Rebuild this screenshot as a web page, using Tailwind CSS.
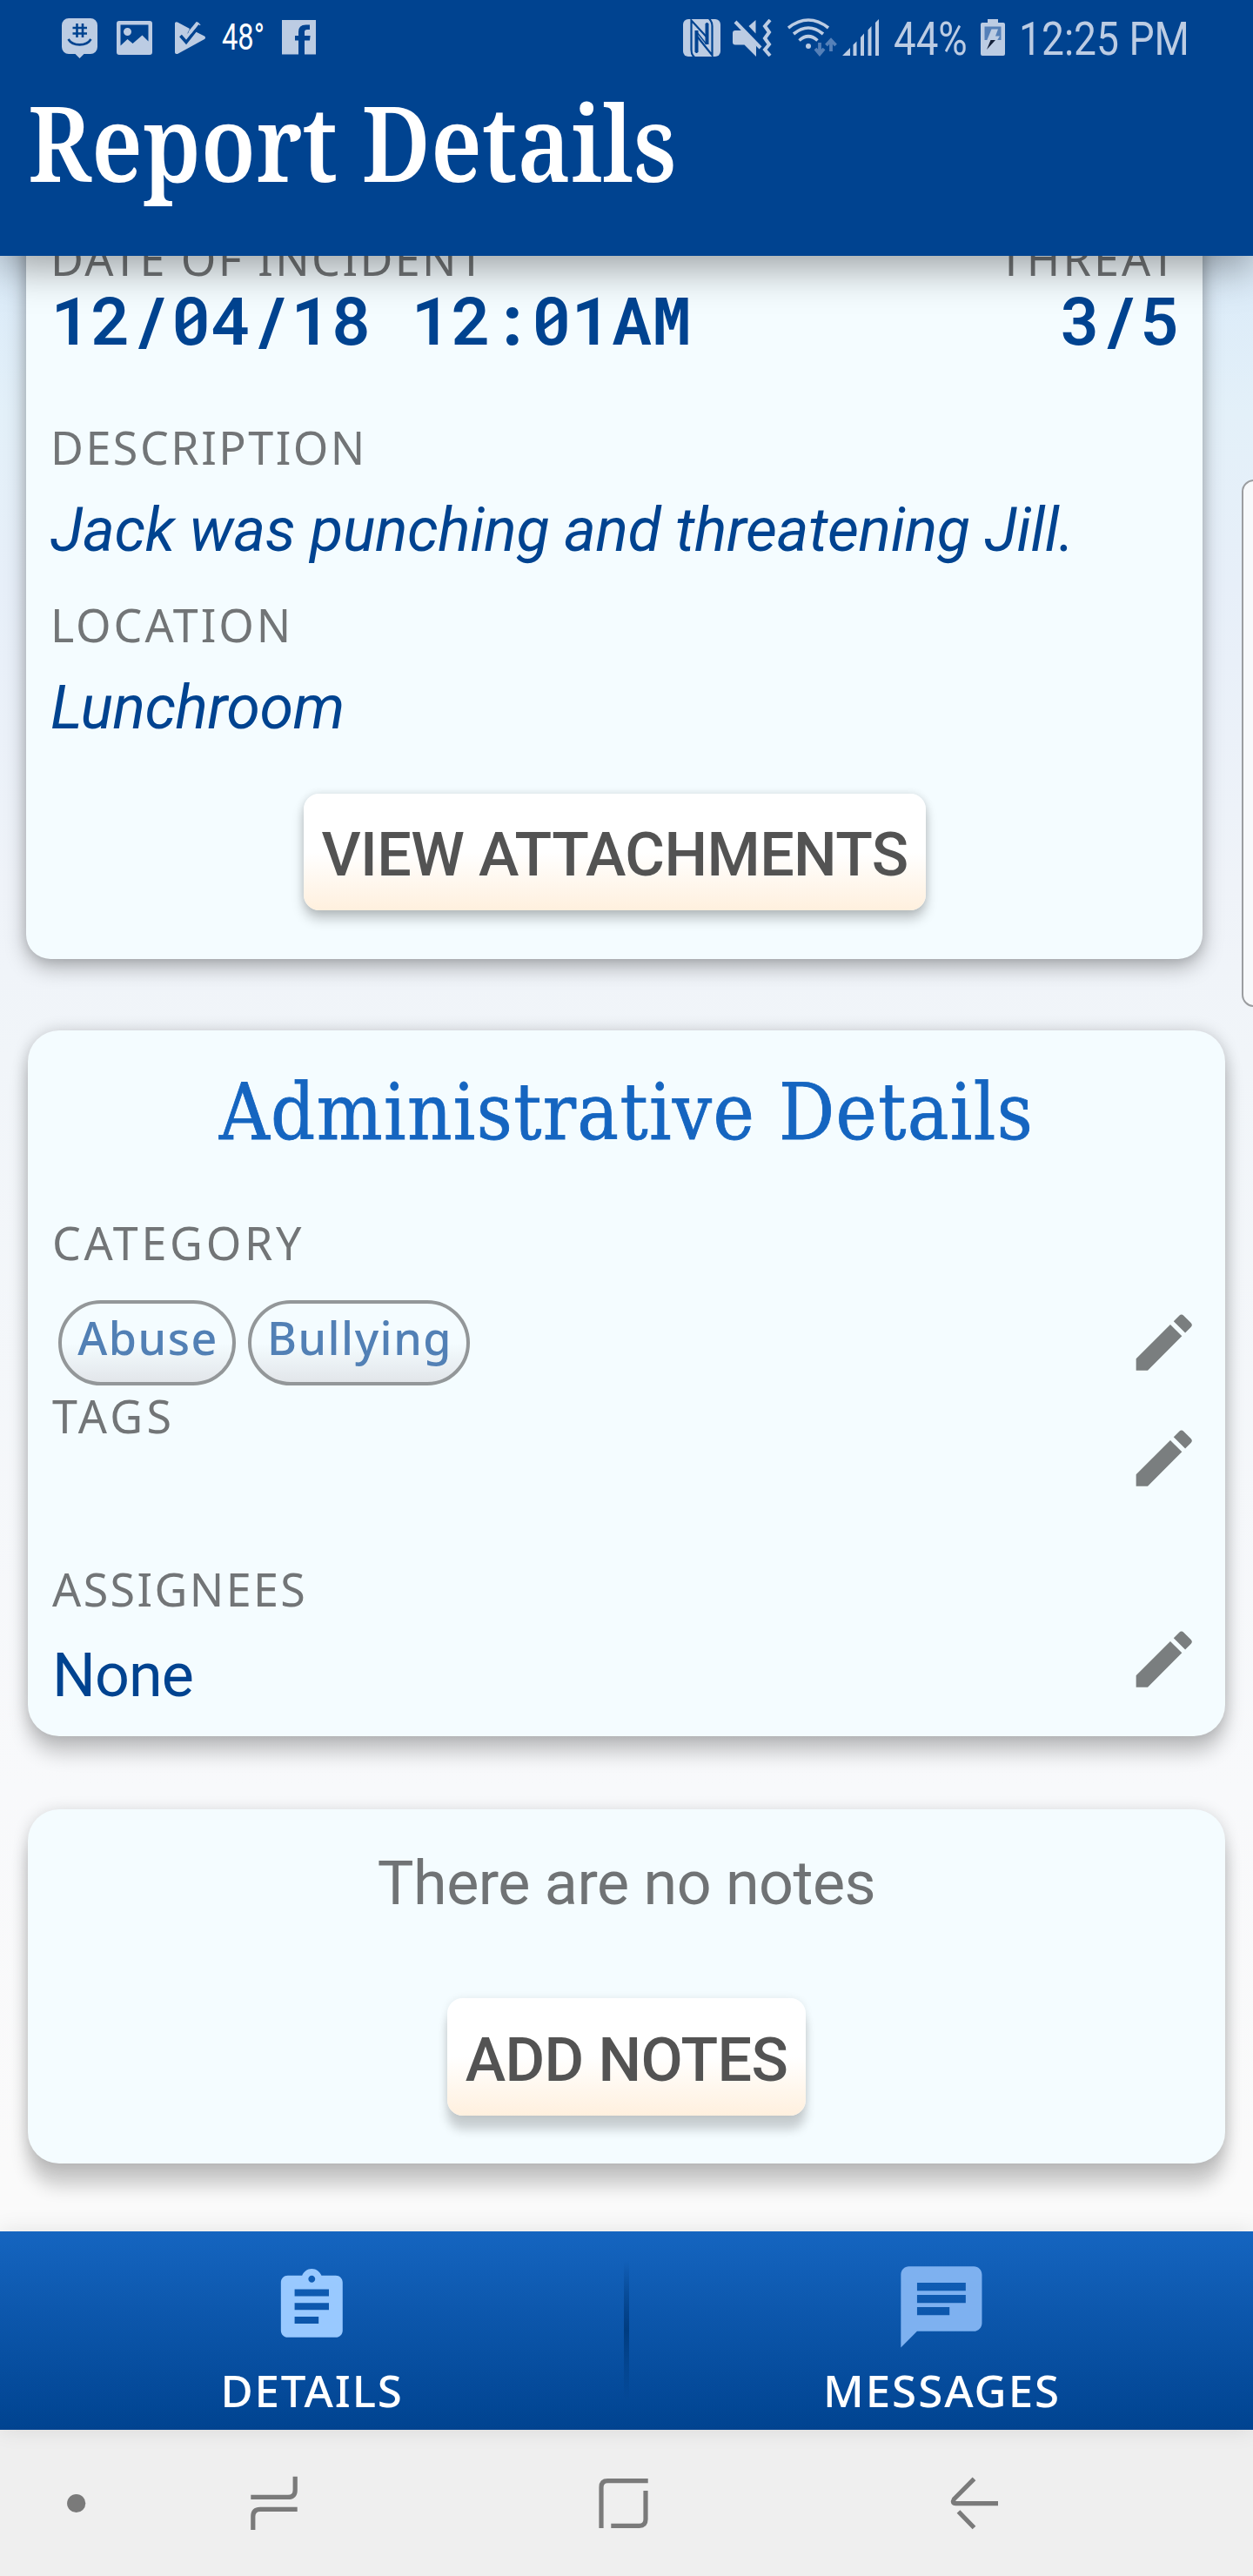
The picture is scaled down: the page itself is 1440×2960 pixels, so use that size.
<!DOCTYPE html>
<html lang="en">
<head>
<meta charset="utf-8">
<title>Report Details</title>
<script src="https://cdn.jsdelivr.net/npm/@tailwindcss/browser@4"></script>
</head>
<body class="w-[1440px] h-[2960px] overflow-hidden flex flex-col bg-[#fafafa] font-[Roboto,sans-serif]">

<header class="relative z-10 h-[294px] shrink-0 bg-[#004390] shadow-[0_14px_44px_rgba(0,0,0,0.36)]">
  <!-- status bar -->
  <div class="h-[88px] flex items-start pl-[71px] text-[#bccce3]">
    <svg class="w-[41px] h-[46px] mt-[20.5px] shrink-0" viewBox="0 0 41 46" fill="currentColor"><path d="M8 0h25a8 8 0 0 1 8 8v25a8 8 0 0 1-8 8h-7.500l-5 5-5-5H8a8 8 0 0 1-8-8V8a8 8 0 0 1 8-8z"/><path d="M17.500 6v16M24 6v16M12.500 11h16.500M12.500 17.500h16.500M7.500 24c5 8.500 21 8.500 26 0" fill="none" stroke="#004390" stroke-width="2.600"/></svg>
    <svg class="w-[41px] h-[39px] mt-[24px] ml-[22px] shrink-0" viewBox="0 0 41 39"><path fill="currentColor" fill-rule="evenodd" d="M3 0h35a3 3 0 0 1 3 3v33a3 3 0 0 1-3 3H3a3 3 0 0 1-3-3V3a3 3 0 0 1 3-3zM4.500 4.500v24l8-7.500 6 5 11-9.500 7 7V4.500zM12.500 8a4.500 4.500 0 1 0 0 9 4.500 4.500 0 0 0 0-9z"/></svg>
    <svg class="w-[35px] h-[38px] mt-[24.5px] ml-[26px] shrink-0" viewBox="0 0 35 38"><path fill="currentColor" d="M0 1.500Q1-.5 3 .5L17 8l-3 6 12.500-13.500 3 3L24 11.500l10 5q2 1.500 0 3.500L3 37q-2.500.5-3-1.500z"/><path d="M6.500 16l6.500 7.500L28.500 4" fill="none" stroke="#004390" stroke-width="3.600"/><path d="M17 12.500L26.500 1" fill="none" stroke="currentColor" stroke-width="4"/></svg>
    <div class="w-[69px] h-[50px] ml-[19px] mt-[17px] shrink-0 whitespace-nowrap"><span class="inline-block origin-left scale-x-[0.76] text-[43px] leading-[50px] text-white">48°</span></div>
    <svg class="w-[39px] h-[39.500px] mt-[23.300px] shrink-0" viewBox="0 0 39 39.500"><path fill="currentColor" d="M0 0h39v39.500H26V23.500h6l.6-5.500H26v-4.500q0-2.500 3-2.500h3V5.500h-4.500q-8.500 0-8.500 8V18h-4v5.500h4v16H0z"/></svg>
    <svg class="w-[43px] h-[43px] mt-[22px] ml-[422px] shrink-0" viewBox="0 0 43 43" fill="none" stroke="#004390"><rect width="43" height="43" rx="6" fill="#bccce3" stroke="none"/><path stroke-width="2.200" d="M13 43.500Q9.500 41 9.500 35V1.500L27.500 21V4M30 -.5Q33.500 3 33.500 8V41.500L15.500 19V39"/><path stroke-width="4" d="M15.500 13V38M27.500 5V29"/><path stroke-width="1.400" d="M15.500 14.500L27 29"/></svg>
    <svg class="w-[45px] h-[43px] mt-[22px] ml-[14px] shrink-0" viewBox="0 0 45 43" fill="currentColor"><path d="M26.500 1v15.500l-8-8.500z"/><path d="M3 3l29 30" stroke="#004390" stroke-width="9" fill="none"/><path d="M3 3l29 30" stroke="currentColor" stroke-width="4" fill="none"/><path d="M0 16q0-3 3-3h9l15 17.500V43L13.500 29.500H3q-3 0-3-3z"/><path d="M43 1l-6 7 5 7-5 7 5 7-5 6 6 7" stroke="currentColor" stroke-width="4" fill="none"/></svg>
    <svg class="w-[57px] h-[44px] mt-[21px] ml-[18px] shrink-0" viewBox="0 0 57 44" fill="none" stroke="currentColor" stroke-width="3.600"><path d="M1 11q23-18 46 0M7 18q17-14 34 0M13.500 25.500q10.500-9.500 21 0"/><circle cx="24" cy="32" r="3" fill="currentColor" stroke="none"/><g stroke="#5580b8" stroke-width="3.800"><path d="M37 28v12M32 35l5 6 5-6M50 38V25M44.500 31l5.500-6 5.500 6"/></g></svg>
    <svg class="w-[42px] h-[42px] mt-[22px] ml-[6px] shrink-0" viewBox="0 0 42 42" fill="currentColor"><path d="M0 42l9-9v9zM12.500 29.500l4-4V42h-4zM21 21l4-4.500V42h-4zM29.500 12.500l4-4.500V42h-4zM38 4l4-4v42h-4z"/></svg>
    <div class="w-[88px] h-[60px] ml-[17px] mt-[15px] shrink-0 whitespace-nowrap"><span class="inline-block origin-left scale-x-[0.845] text-[54px] leading-[60px]">44%</span></div>
    <svg class="w-[28px] h-[42px] mt-[22px] ml-[12px] shrink-0" viewBox="0 0 28 42"><path fill="currentColor" d="M8 0h12v4h6q2 0 2 2v34q0 2-2 2H2q-2 0-2-2V6q0-2 2-2h6z"/><path fill="#5580b8" d="M4.500 8.500h19V24h-19z"/><path fill="currentColor" d="M12.500 11.500H20l-3 8h5L18 26H6.500z"/><path fill="#14213a" d="M11.500 24H17L7 35z"/></svg>
    <div class="w-[200px] h-[60px] ml-[16px] mt-[15px] shrink-0 whitespace-nowrap"><span class="inline-block origin-left scale-x-[0.855] text-[54px] leading-[60px]">12:25 PM</span></div>
  </div>
  <h1 class="mt-[13.500px] pl-[32px] h-[120px]"><span class="inline-block origin-left scale-x-[0.873] whitespace-nowrap font-['Noto_Serif',serif] font-semibold text-[121px] leading-[120px] text-white">Report Details</span></h1>
</header>

<main class="-mt-[40px] h-[2310px] shrink-0 bg-[linear-gradient(#d8e9f8_0px,#e3f0f9_220px,#e7eff9_420px,#eff3f9_760px,#f1f5f9_960px,#f8f9fb_1800px,#fafafa_2240px)] overflow-hidden relative">

  <!-- report card -->
  <section class="ml-[30px] w-[1352px] h-[848px] px-[30px] pt-[12.500px] bg-[#f4fcff] rounded-b-[28px] shadow-[0_10px_24px_rgba(0,0,0,0.28),0_0_14px_rgba(0,0,0,0.14)]">
    <div class="flex justify-between font-['Noto_Sans',sans-serif] text-[52px] leading-[60px] text-[#727577]">
      <span class="tracking-[2.400px] -ml-[2px]">DATE OF INCIDENT</span><span class="tracking-[3.200px] -mr-[2px]">THREAT</span>
    </div>
    <div class="flex justify-between -ml-[1.500px] -mr-[4px] font-['Roboto_Mono',monospace] font-semibold text-[76.700px] leading-[80px] text-[#004390]">
      <span>12/04/18 12:01AM</span><span>3/5</span>
    </div>
    <div class="mt-[77px] -ml-[2px] font-['Noto_Sans',sans-serif] text-[52px] leading-[60px] tracking-[2.500px] text-[#727577]">DESCRIPTION</div>
    <p class="mt-[25.500px] -ml-[2px] whitespace-nowrap italic text-[70px] leading-[80px] tracking-[-0.400px] text-[#004390]">Jack was punching and threatening Jill.</p>
    <div class="mt-[38.500px] -ml-[2px] font-['Noto_Sans',sans-serif] text-[52px] leading-[60px] tracking-[2.900px] text-[#727577]">LOCATION</div>
    <p class="mt-[25.500px] -ml-[2px] italic text-[70px] leading-[80px] tracking-[-0.500px] text-[#004390]">Lunchroom</p>
    <button class="mt-[58.500px] ml-[289px] w-[715px] h-[134.500px] pt-[7px] flex items-center justify-center rounded-[18px] bg-[linear-gradient(#fff_50%,#fff0de)] shadow-[0_10px_14px_rgba(0,0,0,0.22),0_0_10px_rgba(0,0,0,0.12)] font-medium text-[70px] leading-[80px] tracking-[-0.600px] whitespace-nowrap text-[#535353]">VIEW ATTACHMENTS</button>
  </section>

  <!-- administrative details -->
  <section class="mt-[81.600px] ml-[32px] w-[1376px] h-[811.400px] px-[28px] pt-[44.600px] bg-[#f4fcff] rounded-[36px] shadow-[0_20px_22px_rgba(0,0,0,0.20),0_0_18px_rgba(0,0,0,0.18)]">
    <h2 class="text-center whitespace-nowrap font-['DejaVu_Serif_Condensed','DejaVu_Serif',serif] text-[89px] leading-[100px] tracking-[1.350px] [-webkit-text-stroke:0.8px_#1565c0] text-[#1565c0]">Administrative Details</h2>
    <div class="mt-[70px] font-['Noto_Sans',sans-serif] text-[52px] leading-[60px] tracking-[3.700px] text-[#727577]">CATEGORY</div>
    <div class="mt-[35.500px] h-[98px] flex items-center justify-between">
      <div class="flex gap-[14px] ml-[7px] font-['Noto_Sans',sans-serif] font-medium text-[52px] leading-[60px] text-[#5280b5]">
        <span class="w-[204px] h-[98px] pt-[9px] pl-[2px] text-center rounded-[49px] border-4 border-[#939799] bg-[linear-gradient(#f4fcff_50%,#e2e6ea)] tracking-[1.500px]">Abuse</span>
        <span class="w-[255px] h-[98px] pt-[9px] pl-[2px] text-center rounded-[49px] border-4 border-[#939799] bg-[linear-gradient(#f4fcff_50%,#e2e6ea)] tracking-[1.500px]">Bullying</span>
      </div>
      <svg class="w-[85.300px] h-[85.300px]" viewBox="0 0 24 24" fill="#7a7e7f"><path d="M3 17.250V21h3.750L17.810 9.940l-3.750-3.750L3 17.250zM20.710 7.040a1 1 0 0 0 0-1.410l-2.340-2.340a1 1 0 0 0-1.410 0l-1.830 1.830 3.750 3.750 1.830-1.830z"/></svg>
    </div>
    <div class="mt-[4.500px] h-[199px] flex justify-between">
      <span class="mt-[1px] font-['Noto_Sans',sans-serif] text-[52px] leading-[60px] tracking-[4.400px] text-[#727577]">TAGS</span>
      <svg class="w-[85.300px] h-[85.300px] mt-[36.800px]" viewBox="0 0 24 24" fill="#7a7e7f"><path d="M3 17.250V21h3.750L17.810 9.940l-3.750-3.750L3 17.250zM20.710 7.040a1 1 0 0 0 0-1.410l-2.340-2.340a1 1 0 0 0-1.410 0l-1.830 1.830 3.750 3.750 1.830-1.830z"/></svg>
    </div>
    <div class="mt-[1px] font-['Noto_Sans',sans-serif] text-[52px] leading-[60px] tracking-[2.400px] text-[#727577]">ASSIGNEES</div>
    <div class="flex justify-between">
      <span class="mt-[28.500px] text-[70px] leading-[80px] tracking-[-0.900px] text-[#004390]">None</span>
      <svg class="w-[85.300px] h-[85.300px] mt-[8px]" viewBox="0 0 24 24" fill="#7a7e7f"><path d="M3 17.250V21h3.750L17.810 9.940l-3.750-3.750L3 17.250zM20.710 7.040a1 1 0 0 0 0-1.410l-2.340-2.340a1 1 0 0 0-1.410 0l-1.830 1.830 3.750 3.750 1.830-1.830z"/></svg>
    </div>
  </section>

  <!-- notes -->
  <section class="mt-[84px] ml-[32px] w-[1376px] h-[407.500px] pt-[45px] flex flex-col items-center bg-[#f4fcff] rounded-[36px] shadow-[0_26px_20px_rgba(0,0,0,0.19),0_2px_18px_rgba(0,0,0,0.16)]">
    <p class="text-[70px] leading-[80px] tracking-[-0.500px] text-[#707375]">There are no notes</p>
    <button class="mt-[92px] w-[412px] h-[135px] pt-[7px] flex items-center justify-center rounded-[18px] bg-[linear-gradient(#fff_50%,#fff0de)] shadow-[0_16px_12px_rgba(0,0,0,0.18),0_0_10px_rgba(0,0,0,0.08)] font-medium text-[70px] leading-[80px] tracking-[-0.600px] whitespace-nowrap text-[#535353]">ADD NOTES</button>
  </section>

  <!-- edge panel handle -->
  <div class="absolute left-[1427px] top-[297px] w-[30px] h-[606px] rounded-l-[14px] border-2 border-[#9b9da0] bg-[#f7f9fb]"></div>
</main>

<!-- tab bar -->
<nav class="relative h-[228px] shrink-0 flex justify-center bg-[linear-gradient(#1565c0,#004390)] shadow-[0_0_24px_rgba(0,0,0,0.10)] font-['Noto_Sans',sans-serif] font-medium text-[51px] leading-[60px] text-white">
  <div class="w-[717px] flex flex-col items-center">
    <svg class="w-[94.600px] h-[94.600px] mt-[39px]" viewBox="0 0 24 24" fill="#99c9ff"><path d="M19 3h-4.180C14.400 1.840 13.300 1 12 1c-1.300 0-2.400.84-2.820 2H5c-1.100 0-2 .9-2 2v14c0 1.100.9 2 2 2h14c1.100 0 2-.9 2-2V5c0-1.100-.9-2-2-2zm-7 0c.55 0 1 .45 1 1s-.45 1-1 1-1-.45-1-1 .45-1 1-1zm2 14H7v-2h7v2zm3-4H7v-2h10v2zm0-4H7V7h10v2z"/></svg>
    <span class="mt-[18px] tracking-[1.800px]">DETAILS</span>
  </div>
  <div class="w-[6px] h-[160px] mt-[34px] bg-[linear-gradient(transparent,#003c80_50%,transparent)]"></div>
  <div class="w-[717px] flex flex-col items-center">
    <svg class="w-[111.800px] h-[111.800px] mt-[31px]" viewBox="0 0 24 24" fill="#7eb1f0"><path d="M20 2H4c-1.100 0-1.990.9-1.990 2L2 22l4-4h14c1.100 0 2-.9 2-2V4c0-1.100-.9-2-2-2zM6 9h12v2H6V9zm8 5H6v-2h8v2zm4-6H6V6h12v2z"/></svg>
    <span class="mt-[8.800px] pl-[2px] tracking-[2px]">MESSAGES</span>
  </div>
</nav>

<!-- system navigation -->
<footer class="h-[168px] shrink-0 bg-[#efefef]">
  <svg class="w-[1440px] h-[168px]" viewBox="0 2792 1440 168" fill="none" stroke="#7a7a7a" stroke-width="5.200"><circle cx="87.700" cy="2876.500" r="10.600" fill="#7a7a7a" stroke="none"/><path d="M288.300 2869.400H331q8.200 0 8.200-8.200V2845.700M341.700 2883.400H299q-8.200 0-8.200 8.200V2907"/><path d="M691 2905V2858q0-7.300 7.300-7.300H744.700M742 2862V2895q0 7.300-7.300 7.300H702.300"/><path d="M1119.500 2848.300L1096.500 2871.500Q1093.500 2876.700 1098.500 2876.700H1147M1101.500 2886L1119.500 2904.500"/></svg>
</footer>
</body>
</html>
